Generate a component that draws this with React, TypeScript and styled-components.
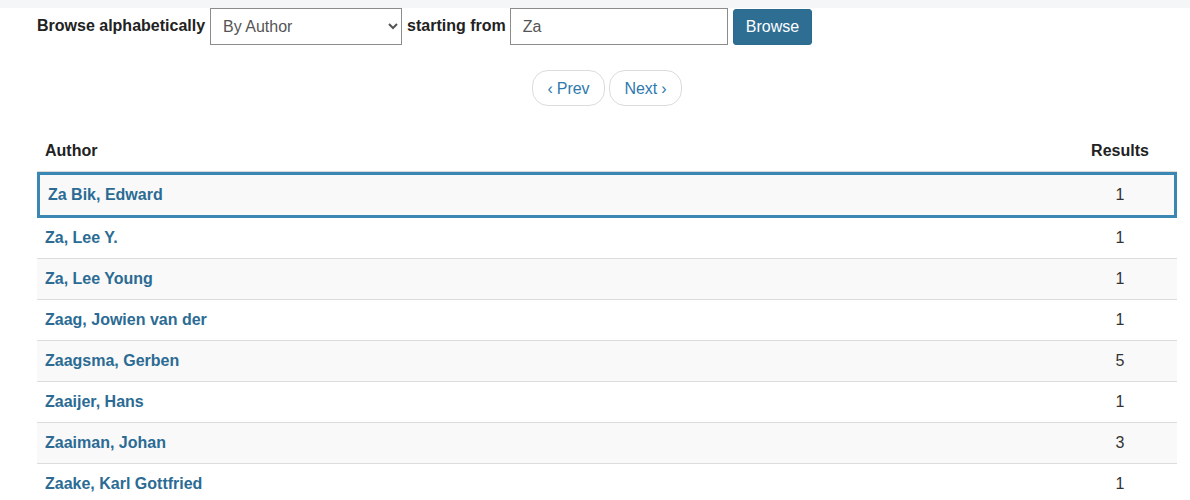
import React from "react";
import styled, { createGlobalStyle, css } from "styled-components";

const GlobalStyle = createGlobalStyle`
  * { box-sizing: border-box; }
  body {
    margin: 0;
    background: #fff;
    font-family: "Liberation Sans", Arial, sans-serif;
    font-size: 16px;
    color: #333;
  }
`;

const TopBand = styled.div`
  height: 8px;
  background: #f5f6f8;
`;

const Page = styled.main`
  padding: 0 13px 0 37px;
`;

const FormRow = styled.form`
  display: flex;
  align-items: center;
  height: 37px;
`;

const Label = styled.label<{ $gap: number }>`
  font-weight: bold;
  font-size: 16px;
  line-height: 22px;
  color: #222;
  margin: 0 ${(p) => p.$gap}px 2px 0;
  white-space: nowrap;
`;

const fieldBase = css`
  height: 37px;
  border: 1px solid #8c8c8c;
  border-radius: 0;
  background: #fff;
  font-family: "Liberation Sans", Arial, sans-serif;
  font-size: 16px;
  color: #555;
`;

const Select = styled.select`
  ${fieldBase};
  width: 192px;
  padding: 0 6px 0 8px;
  margin-right: 5px;
`;

const Input = styled.input`
  ${fieldBase};
  width: 218px;
  padding: 0 12px;
  margin-right: 5px;
  outline: none;
`;

const PrimaryButton = styled.button`
  height: 36px;
  margin-top: 1px;
  padding: 0 12px;
  border: 1px solid #2a6a8e;
  border-radius: 3px;
  background: #2d6e92;
  color: #fff;
  font-family: "Liberation Sans", Arial, sans-serif;
  font-size: 16px;
  cursor: pointer;
`;

const Pager = styled.nav`
  display: flex;
  justify-content: center;
  gap: 4px;
  margin-top: 25px;
`;

const PageButton = styled.a`
  display: inline-flex;
  align-items: center;
  justify-content: center;
  width: 73px;
  height: 36px;
  padding-top: 1px;
  border: 1px solid #dcdcdc;
  border-radius: 16px;
  background: #fff;
  color: #2f79ad;
  font-size: 16px;
  text-decoration: none;
  gap: 4px;
`;

const Chevron = styled.span`
  font-size: 16px;
`;

const Table = styled.table`
  width: 100%;
  margin-top: 25px;
  border-collapse: collapse;
`;

const Th = styled.th<{ $center?: boolean }>`
  padding: 8px;
  line-height: 24px;
  font-size: 16px;
  font-weight: bold;
  color: #222;
  text-align: ${(p) => (p.$center ? "center" : "left")};
  border-bottom: 2px solid #dcdcdc;
  ${(p) => p.$center && "width: 114px;"}
`;

const Row = styled.tr<{ $striped: boolean; $focused: boolean }>`
  background: ${(p) => (p.$striped ? "#f9f9f9" : "#fff")};
  border-top: 1px solid #dcdcdc;
  ${(p) =>
    p.$focused &&
    css`
      border-top: none;
      outline: 3px solid #3a87b4;
      outline-offset: -3px;
      & > td {
        padding-top: 10px;
        padding-bottom: 10px;
      }
      & > td:first-child {
        padding-left: 11px;
      }
    `}
`;

const Td = styled.td<{ $center?: boolean }>`
  padding: 8px;
  line-height: 24px;
  font-size: 16px;
  color: #333;
  text-align: ${(p) => (p.$center ? "center" : "left")};
`;

const AuthorLink = styled.a`
  color: #2b6b94;
  font-weight: bold;
  text-decoration: none;
`;

const rows: [string, number][] = [
  ["Za Bik, Edward", 1],
  ["Za, Lee Y.", 1],
  ["Za, Lee Young", 1],
  ["Zaag, Jowien van der", 1],
  ["Zaagsma, Gerben", 5],
  ["Zaaijer, Hans", 1],
  ["Zaaiman, Johan", 3],
  ["Zaake, Karl Gottfried", 1],
];

export default function App() {
  return (
    <>
      <GlobalStyle />
      <TopBand />
      <Page>
        <FormRow onSubmit={(e) => e.preventDefault()}>
          <Label $gap={5}>Browse alphabetically</Label>
          <Select defaultValue="author">
            <option value="author">By Author</option>
            <option value="title">By Title</option>
          </Select>
          <Label $gap={4}>starting from</Label>
          <Input defaultValue="Za" />
          <PrimaryButton type="submit">Browse</PrimaryButton>
        </FormRow>
        <Pager>
          <PageButton href="#">
            <Chevron>‹</Chevron>Prev
          </PageButton>
          <PageButton href="#">
            Next<Chevron>›</Chevron>
          </PageButton>
        </Pager>
        <Table>
          <thead>
            <tr>
              <Th>Author</Th>
              <Th $center>Results</Th>
            </tr>
          </thead>
          <tbody>
            {rows.map(([name, n], i) => (
              <Row key={name} $striped={i % 2 === 0} $focused={i === 0}>
                <Td>
                  <AuthorLink href="#">{name}</AuthorLink>
                </Td>
                <Td $center>{n}</Td>
              </Row>
            ))}
          </tbody>
        </Table>
      </Page>
    </>
  );
}
